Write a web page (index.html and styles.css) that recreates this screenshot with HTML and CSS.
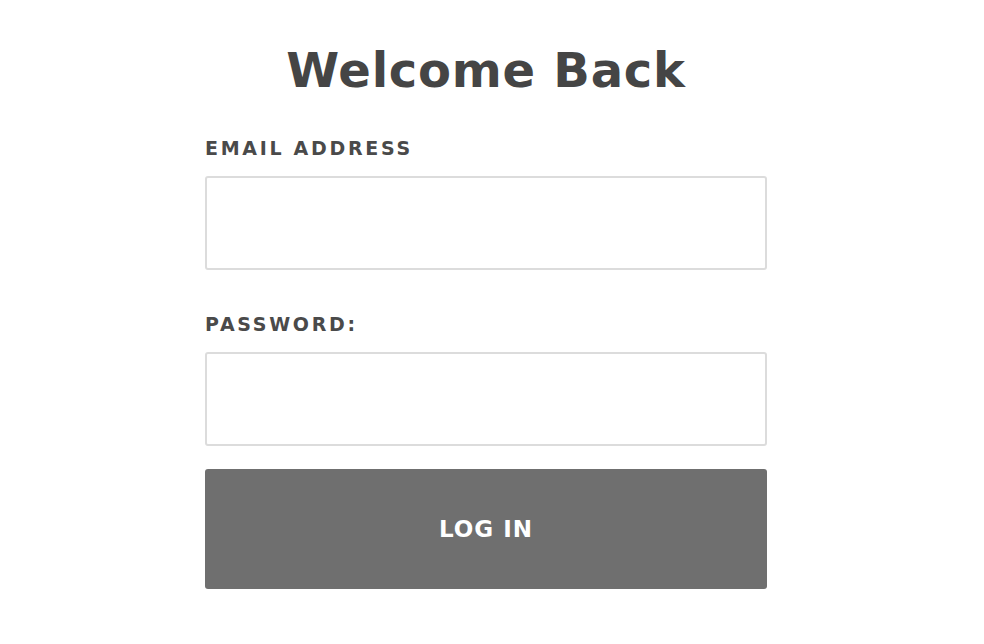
FILE: index.html
```html
<!DOCTYPE html>
<html lang="en">
<head>
<meta charset="utf-8">
<title>Welcome Back</title>
<link rel="stylesheet" href="styles.css">
</head>
<body>
<main class="page">
  <form class="login">
    <h1 class="title">Welcome Back</h1>
    <label class="label" for="email">EMAIL ADDRESS</label>
    <input class="field" id="email" type="email">
    <label class="label label-pass" for="pass">PASSWORD:</label>
    <input class="field" id="pass" type="password">
    <button class="btn" type="button">LOG IN</button>
  </form>
</main>
</body>
</html>
```
FILE: styles.css
```css
html, body {
  margin: 0;
  padding: 0;
  background: #ffffff;
}
body {
  font-family: "DejaVu Sans", "Open Sans", sans-serif;
  color: #464646;
}
.page {
  display: flex;
  justify-content: center;
  padding-right: 12px;
}
.login {
  width: 562px;
  display: flex;
  flex-direction: column;
}
.title {
  margin: 38px 0 0;
  font-size: 48px;
  line-height: 64px;
  font-weight: 700;
  text-align: center;
  color: #454545;
  letter-spacing: 0.75px;
}
.label {
  margin-top: 32px;
  font-size: 19px;
  line-height: 28px;
  font-weight: 700;
  letter-spacing: 2.7px;
  color: #4a4a4a;
}
.label-pass {
  margin-top: 40px;
}
.field {
  box-sizing: border-box;
  margin-top: 14px;
  height: 94px;
  width: 100%;
  border: 2px solid #dcdcdc;
  border-radius: 3px;
  background: #fff;
  padding: 0 16px;
  font-size: 20px;
}
.btn {
  margin-top: 23px;
  height: 120px;
  width: 100%;
  border: none;
  border-radius: 3px;
  background: #6f6f6f;
  color: #ffffff;
  font-family: inherit;
  font-size: 23px;
  font-weight: 700;
  letter-spacing: 1px;
  cursor: pointer;
}
```
